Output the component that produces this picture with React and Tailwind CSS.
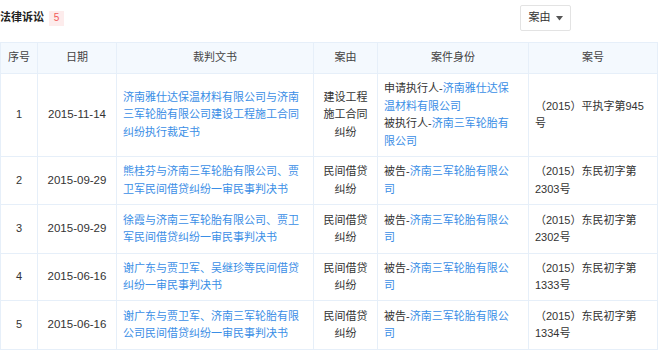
import React from "react";

const B = ({ children }) => <span className="text-[#3a8ee6]">{children}</span>;

const rows = [
  {
    h: "h-[83px]",
    no: "1",
    date: "2015-11-14",
    doc: ["济南雅仕达保温材料有限公司与济南", "三军轮胎有限公司建设工程施工合同", "纠纷执行裁定书"],
    cause: ["建设工程", "施工合同", "纠纷"],
    party: [
      <>申请执行人-<B>济南雅仕达保</B></>,
      <B>温材料有限公司</B>,
      <>被执行人-<B>济南三军轮胎有</B></>,
      <B>限公司</B>,
    ],
    num: ["（2015）平执字第945", "号"],
  },
  {
    h: "h-[48px]",
    no: "2",
    date: "2015-09-29",
    doc: ["熊桂芬与济南三军轮胎有限公司、贾", "卫军民间借贷纠纷一审民事判决书"],
    cause: ["民间借贷", "纠纷"],
    party: [<>被告-<B>济南三军轮胎有限公</B></>, <B>司</B>],
    num: ["（2015）东民初字第", "2303号"],
  },
  {
    h: "h-[49px]",
    no: "3",
    date: "2015-09-29",
    doc: ["徐霞与济南三军轮胎有限公司、贾卫", "军民间借贷纠纷一审民事判决书"],
    cause: ["民间借贷", "纠纷"],
    party: [<>被告-<B>济南三军轮胎有限公</B></>, <B>司</B>],
    num: ["（2015）东民初字第", "2302号"],
  },
  {
    h: "h-[47px]",
    no: "4",
    date: "2015-06-16",
    doc: ["谢广东与贾卫军、吴继珍等民间借贷", "纠纷一审民事判决书"],
    cause: ["民间借贷", "纠纷"],
    party: [<>被告-<B>济南三军轮胎有限公</B></>, <B>司</B>],
    num: ["（2015）东民初字第", "1333号"],
  },
  {
    h: "h-[49px]",
    no: "5",
    date: "2015-06-16",
    doc: ["谢广东与贾卫军、济南三军轮胎有限", "公司民间借贷纠纷一审民事判决书"],
    cause: ["民间借贷", "纠纷"],
    party: [<>被告-<B>济南三军轮胎有限公</B></>, <B>司</B>],
    num: ["（2015）东民初字第", "1334号"],
  },
];

const Lines = ({ items }) => (
  <div>
    {items.map((l, i) => (
      <div key={i} className="whitespace-nowrap">{l}</div>
    ))}
  </div>
);

const cell = "border-r border-b border-[#e6eff9] flex items-center";

export default function App() {
  return (
    <div
      className="w-[660px] h-[352px] bg-white text-[#333] text-[11px] leading-[17.5px] overflow-hidden"
      style={{ fontFamily: '"Liberation Sans", "Noto Sans CJK SC", sans-serif' }}
    >
      <div className="flex items-center h-[36px] mb-[6px]">
        <span className="font-bold text-[11px] text-[#222]">法律诉讼</span>
        <span className="ml-[5px] w-[15px] h-[15px] flex items-center justify-center bg-[#fdecec] text-[#f25a5a] text-[10px]">5</span>
        <div className="ml-auto mr-[89px] h-[26px] w-[51px] border border-[#e3e3e3] rounded-[2px] flex items-center justify-center gap-[5px] text-[#333]">
          <span>案由</span>
          <svg width="7" height="5" viewBox="0 0 7 5"><path d="M0 0 L7 0 L3.5 4.5 Z" fill="#555" /></svg>
        </div>
      </div>
      <div className="w-[658px] border-l border-t border-[#e6eff9] grid grid-cols-[37px_79px_197px_64px_151px_129px]">
        {["序号", "日期", "裁判文书", "案由", "案件身份", "案号"].map((t) => (
          <div key={t} className={`${cell} h-[31px] justify-center bg-[#f4f9fe] text-[#444]`}>{t}</div>
        ))}
        {rows.map((r) => (
          <React.Fragment key={r.no}>
            <div className={`${cell} ${r.h} justify-center`}>{r.no}</div>
            <div className={`${cell} ${r.h} justify-center text-[11.5px]`}>{r.date}</div>
            <div className={`${cell} ${r.h} pl-[6px] text-[#3a8ee6]`}><Lines items={r.doc} /></div>
            <div className={`${cell} ${r.h} justify-center text-center`}><Lines items={r.cause} /></div>
            <div className={`${cell} ${r.h} pl-[6px]`}><Lines items={r.party} /></div>
            <div className={`${cell} ${r.h} pl-[6px]`}><Lines items={r.num} /></div>
          </React.Fragment>
        ))}
      </div>
    </div>
  );
}
